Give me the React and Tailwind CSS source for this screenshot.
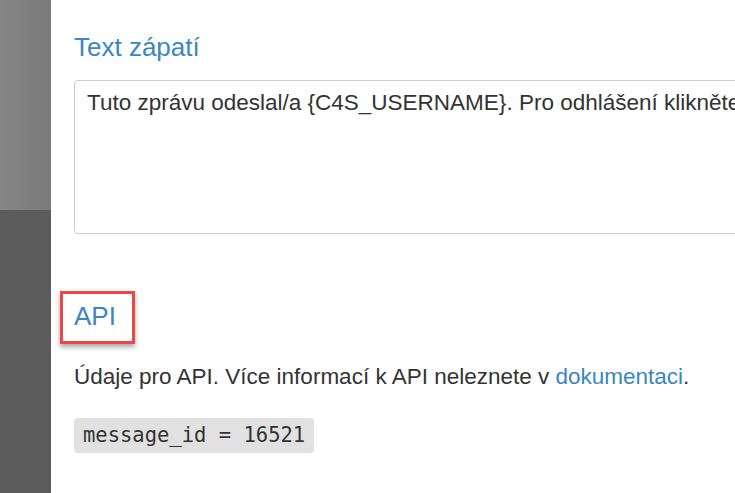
import React from 'react';

const App = () => {
  return (
    <div className="flex h-[493px] w-[735px] overflow-hidden bg-white" style={{ fontFamily: '"Liberation Sans", Arial, sans-serif' }}>
      {/* Postranní panel */}
      <div className="flex w-[51px] shrink-0 flex-col">
        <div className="h-[210px] bg-gradient-to-r from-[#868686] to-[#7a7a7a]" />
        <div className="flex-1 bg-[#5c5c5c]" />
      </div>

      {/* Obsah */}
      <div className="flex-1 pl-[23px]">
        <h3 className="mt-[31px] text-[26px] leading-[32px] text-[#3a87c2]">Text zápatí</h3>

        <div className="mt-[17px] h-[154px] w-[800px] rounded-[4px] border border-[#cccccc] px-[12px] py-[7px] text-[22.5px] leading-[30px] text-[#333333] whitespace-nowrap">
          Tuto zprávu odeslal/a {'{C4S_USERNAME}'}. Pro odhlášení klikněte
        </div>

        <div className="mt-[57px] -ml-[14px] inline-block border-[3px] border-[#ef4448] pl-[11px] pr-[16px] pt-[9px] pb-[12px] shadow-[0_3px_5px_rgba(0,0,0,0.35)]">
          <h3 className="text-[26px] leading-[26px] text-[#3a87c2]">API</h3>
        </div>

        <p className="mt-[19px] text-[22.5px] leading-[28px] text-[#333333] whitespace-nowrap">
          Údaje pro API. Více informací k API neleznete v{' '}
          <a className="text-[#3a87c2]">dokumentaci</a>.
        </p>

        <div className="mt-[27px] inline-block rounded-[4px] bg-[#e1e1e1] px-[9px] py-[5px] text-[20.5px] leading-[25px] text-[#333333]" style={{ fontFamily: '"DejaVu Sans Mono", monospace' }}>
          message_id = 16521
        </div>
      </div>
    </div>
  );
};

export default App;
